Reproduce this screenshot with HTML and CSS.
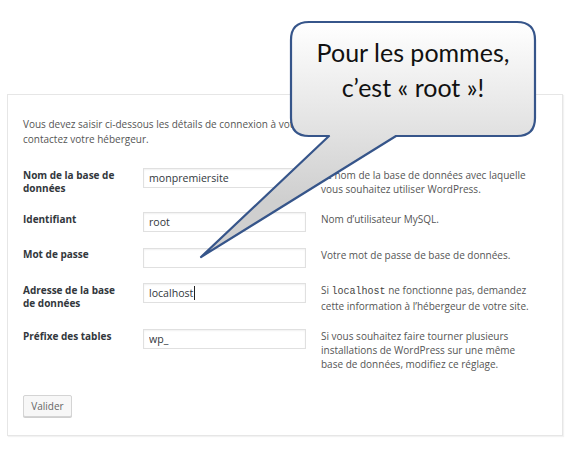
FILE: index.html
```html
<!DOCTYPE html>
<html lang="fr">
<head>
<meta charset="utf-8">
<title>Configuration de la base de données</title>
<link rel="stylesheet" href="styles.css">
</head>
<body>
<div class="card">
  <p class="intro">Vous devez saisir ci-dessous les détails de connexion à votre base de données. Si vous ne les connaissez pas,<br>contactez votre hébergeur.</p>
  <div class="form">
    <label class="lbl">Nom de la base de<br>données</label>
    <input class="field" type="text" value="monpremiersite">
    <p class="desc">Le nom de la base de données avec laquelle<br>vous souhaitez utiliser WordPress.</p>

    <label class="lbl">Identifiant</label>
    <input class="field" type="text" value="root">
    <p class="desc">Nom d’utilisateur MySQL.</p>

    <label class="lbl">Mot de passe</label>
    <input class="field" type="text" value="">
    <p class="desc">Votre mot de passe de base de données.</p>

    <label class="lbl">Adresse de la base<br>de données</label>
    <div class="field-wrap">
      <input class="field" type="text" value="localhost">
      <span class="caret"></span>
    </div>
    <p class="desc">Si <code>localhost</code> ne fonctionne pas, demandez<br>cette information à l’hébergeur de votre site.</p>

    <label class="lbl">Préfixe des tables</label>
    <input class="field" type="text" value="wp_">
    <p class="desc">Si vous souhaitez faire tourner plusieurs<br>installations de WordPress sur une même<br>base de données, modifiez ce réglage.</p>
  </div>
  <button class="btn" type="button">Valider</button>
</div>

<div class="callout">
  <svg class="callout-shape" width="588" height="449" viewBox="0 0 588 449" aria-hidden="true">
    <defs>
      <linearGradient id="cg" gradientUnits="userSpaceOnUse" x1="0" y1="22" x2="0" y2="200">
        <stop offset="0" stop-color="#ffffff"/>
        <stop offset="1" stop-color="#cfcfcf"/>
      </linearGradient>
    </defs>
    <path d="M309 22 H517 Q535 22 535 40 V118 Q535 136 517 136 H396 L201 257 L329 136 H309 Q291 136 291 118 V40 Q291 22 309 22 Z" fill="url(#cg)" stroke="#36558a" stroke-width="2.2" stroke-linejoin="round"/>
  </svg>
  <div class="callout-text">Pour les pommes,<br>c’est « root »!</div>
</div>
</body>
</html>
```

FILE: styles.css
```css
html, body {
  margin: 0;
  padding: 0;
  background: #ffffff;
}

body {
  font-family: "Open Sans", "Noto Sans", sans-serif;
  font-size: 10px;
  color: #444;
  width: 588px;
  height: 449px;
  overflow: hidden;
  position: relative;
}

.card {
  margin: 94px 0 0 7px;
  width: 556px;
  box-sizing: border-box;
  border: 1px solid #e6e6e6;
  box-shadow: 1px 1px 1px rgba(0, 0, 0, 0.05);
  padding: 22px 15px 18px 15px;
  background: #fff;
}

.intro {
  margin: 0;
  line-height: 14.6px;
  color: #555;
  white-space: nowrap;
}

.form {
  margin-top: 22px;
  display: grid;
  grid-template-columns: 105px 163px 1fr;
  column-gap: 15px;
  row-gap: 15.5px;
  align-items: start;
}

.lbl {
  font-size: 10px;
  font-weight: 700;
  color: #32373c;
  line-height: 13.5px;
  padding-top: 0.5px;
}

.desc {
  margin: 0;
  font-size: 10px;
  line-height: 14.2px;
  color: #555;
  white-space: nowrap;
}

.desc code {
  font-family: "Liberation Mono", "DejaVu Sans Mono", monospace;
  font-size: 10px;
  color: #444;
}

.field {
  display: block;
  width: 163px;
  height: 20px;
  box-sizing: border-box;
  margin: 0;
  border: 1px solid #e0e0e0;
  box-shadow: inset 0 1px 2px rgba(0, 0, 0, 0.06);
  padding: 0 5px;
  font-family: "Open Sans", "Noto Sans", sans-serif;
  font-size: 10.6px;
  color: #32373c;
  background: #fff;
  outline: none;
}

.field-wrap {
  position: relative;
}

.caret {
  position: absolute;
  left: 51px;
  top: 3px;
  width: 1px;
  height: 14px;
  background: #222;
}

.btn {
  display: block;
  margin-top: 23px;
  width: 49px;
  height: 22px;
  padding: 0;
  border: 1px solid #d4d4d4;
  border-radius: 2px;
  background: #f7f7f7;
  box-shadow: 0 1px 0 #cfcfcf;
  font-family: "Open Sans", "Noto Sans", sans-serif;
  font-size: 10px;
  color: #666;
}

.callout {
  position: absolute;
  left: 0;
  top: 0;
  width: 588px;
  height: 449px;
  pointer-events: none;
}

.callout-shape {
  position: absolute;
  left: 0;
  top: 0;
}

.callout-text {
  position: absolute;
  left: 291px;
  top: 35px;
  width: 244px;
  text-align: center;
  font-family: Lato, "Open Sans", sans-serif;
  font-size: 25px;
  line-height: 35px;
  color: #111;
}
```
